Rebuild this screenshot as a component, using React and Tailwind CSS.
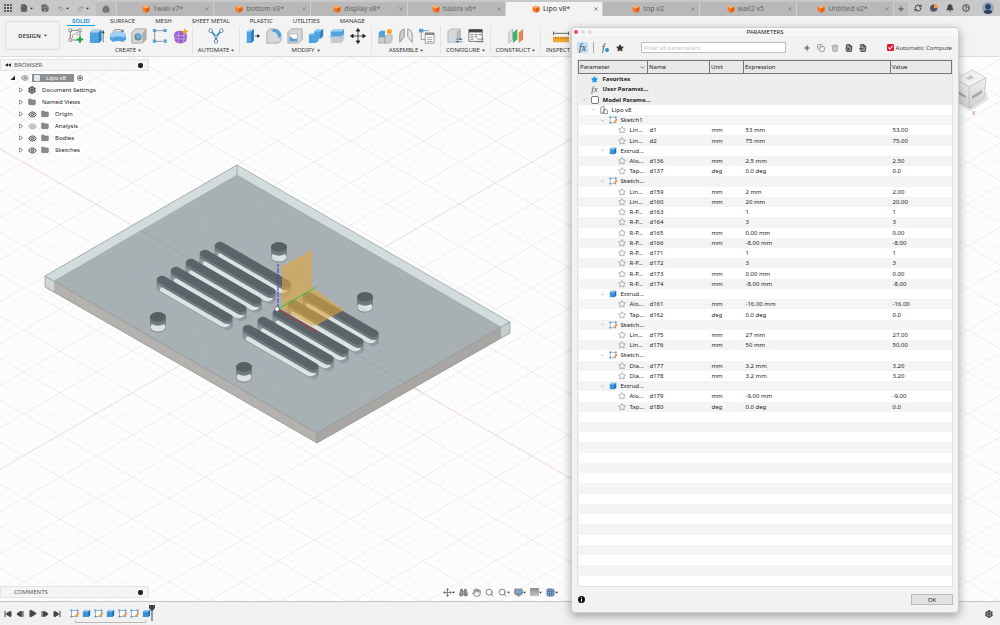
import { useState } from "react"
import {
  Bell, ChevronDown, CircleHelp, Copy, FileText, FileInput, FileOutput,
  Folder, Grid3x3, Hand, House, Move, Play, Plus, Redo2, RefreshCw, Save, Search, Settings,
  SkipBack, SkipForward, Star, StepBack, StepForward, Trash2, Undo2, X, Eye, Monitor, Binoculars,
} from "lucide-react"

const DOC_TABS = ["1wall v7*", "bottom v3*", "display v8*", "hasira v6*", "Lipo v8*", "top v2", "wall2 v5", "Untitled v2*"]
const RIBBON_TABS = ["SOLID", "SURFACE", "MESH", "SHEET METAL", "PLASTIC", "UTILITIES", "MANAGE"]

// kind, label, name, unit, expression, value
const PARAMS = [
  ["fav", "Favorites"],
  ["user", "User Paramet..."],
  ["model", "Model Parame..."],
  ["comp", "Lipo v8"],
  ["sketch", "Sketch1"],
  ["leaf", "Lin...", "d1", "mm", "53 mm", "53.00"],
  ["leaf", "Lin...", "d2", "mm", "75 mm", "75.00"],
  ["extrude", "Extrud..."],
  ["leaf", "Alo...", "d136", "mm", "2.5 mm", "2.50"],
  ["leaf", "Tap...", "d137", "deg", "0.0 deg", "0.0"],
  ["sketch", "Sketch..."],
  ["leaf", "Lin...", "d159", "mm", "2 mm", "2.00"],
  ["leaf", "Lin...", "d160", "mm", "20 mm", "20.00"],
  ["leaf", "R-P...", "d163", "", "1", "1"],
  ["leaf", "R-P...", "d164", "", "3", "3"],
  ["leaf", "R-P...", "d165", "mm", "0.00 mm", "0.00"],
  ["leaf", "R-P...", "d166", "mm", "-8.00 mm", "-8.00"],
  ["leaf", "R-P...", "d171", "", "1", "1"],
  ["leaf", "R-P...", "d172", "", "3", "3"],
  ["leaf", "R-P...", "d173", "mm", "0.00 mm", "0.00"],
  ["leaf", "R-P...", "d174", "mm", "-8.00 mm", "-8.00"],
  ["extrude", "Extrud..."],
  ["leaf", "Alo...", "d161", "mm", "-16.00 mm", "-16.00"],
  ["leaf", "Tap...", "d162", "deg", "0.0 deg", "0.0"],
  ["sketch", "Sketch..."],
  ["leaf", "Lin...", "d175", "mm", "27 mm", "27.00"],
  ["leaf", "Lin...", "d176", "mm", "50 mm", "50.00"],
  ["sketch", "Sketch..."],
  ["leaf", "Dia...", "d177", "mm", "3.2 mm", "3.20"],
  ["leaf", "Dia...", "d178", "mm", "3.2 mm", "3.20"],
  ["extrude", "Extrud..."],
  ["leaf", "Alo...", "d179", "mm", "-9.00 mm", "-9.00"],
  ["leaf", "Tap...", "d180", "deg", "0.0 deg", "0.0"],
]
const ROW_COUNT = 50
const ROWS = Array.from({ length: ROW_COUNT }, (_, i) => PARAMS[i] ?? ["empty", ""])

const INDENT = {
  fav: "pl-[2px]", user: "pl-[2px]", model: "pl-[2px]", comp: "pl-[11px]",
  sketch: "pl-[20px]", extrude: "pl-[20px]", leaf: "pl-[29px]", empty: "",
}

function Cube({ className }) {
  return (
    <svg viewBox="0 0 10 10" className={className} aria-hidden="true">
      <path d="M5 .5 9.2 2.4v5L5 9.6.8 7.4v-5Z" fill="#f47a1f" />
      <path d="M5 .5 9.2 2.4 5 4.4.8 2.4Z" fill="#ffb070" />
      <path d="M5 4.4 9.2 2.4v5L5 9.6Z" fill="#e35f0d" />
    </svg>
  )
}

function SketchIcon({ className }) {
  return (
    <svg viewBox="0 0 10 10" className={className} aria-hidden="true">
      <rect x="1.5" y="1.5" width="7" height="7" fill="#fff" stroke="#7d97ad" strokeWidth=".8" />
      <path d="M.5.5h2v2h-2zM7.5.5h2v2h-2zM.5 7.5h2v2h-2z" fill="#4f9bd3" />
      <path d="m5.5 8.8.5-1.8 3-3 1.2 1.2-3 3Z" fill="#f29b2e" />
      <path d="M9 4l1.2 1.2" stroke="#d44" strokeWidth="1" />
    </svg>
  )
}

function ExtrudeIcon({ className }) {
  return (
    <svg viewBox="0 0 10 10" className={className} aria-hidden="true">
      <path d="M1 3 3 1h6v6L7 9H1Z" fill="#3a93d6" />
      <path d="M1 3 3 1h6L7 3Z" fill="#8cc6ee" />
      <path d="M7 3 9 1v6L7 9Z" fill="#1f6ead" />
    </svg>
  )
}

function Caret() {
  return (
    <svg viewBox="0 0 4 3" className="w-[3px] h-[3px] shrink-0" aria-hidden="true">
      <path d="M0 .4h4L2 2.8Z" fill="#333" />
    </svg>
  )
}

// 18x18 drawings used by the ribbon
const ICONS = {
  newSketch: (
    <>
      <rect x="2.5" y="2.5" width="11" height="11" fill="none" stroke="#555" strokeWidth=".8" />
      <path d="M1 1h3v3H1zM12 1h3v3h-3zM1 12h3v3H1z" fill="#fff" stroke="#666" strokeWidth=".7" />
      <path d="M5 11V8l6-3v4" fill="none" stroke="#555" strokeWidth=".8" strokeDasharray="1.5 .8" />
      <path d="M13.5 9.500v7M10 13h7" stroke="#19a53c" strokeWidth="2.200" />
    </>
  ),
  extrude: (
    <>
      <path d="M1 5 4 2h10v12l-3 3H1Z" fill="#4ea3de" />
      <path d="M1 5 4 2h10l-3 3Z" fill="#a7d3f2" />
      <path d="M11 5 14 2v12l-3 3Z" fill="#2b7dbb" />
      <path d="M16 16V4M15 5.500 16 3l1 2.500Z" fill="#333" stroke="#333" strokeWidth=".7" />
    </>
  ),
  revolve: (
    <>
      <path d="M0 9c0-3 3-5 9-5s9 2 9 5v4l-4 3c-1-2-9-2-10 0l-4-3Z" fill="#4ea3de" />
      <path d="M0 9c0-3 3-5 9-5s9 2 9 5l-3 2c-2-2-10-2-12 0Z" fill="#9fd0f2" />
      <path d="M3 4C6 1 12 1 15 4M15 4l-2.500-.3M15 4l-.2-2.500" fill="none" stroke="#555" strokeWidth=".8" />
    </>
  ),
  hole: (
    <>
      <path d="M1 5 5 1h12v12l-4 4H1Z" fill="#d4d8db" stroke="#888" strokeWidth=".7" />
      <path d="M13 5 17 1v12l-4 4Z" fill="#a9aeb2" />
      <circle cx="8" cy="10" r="4" fill="#73808a" />
      <circle cx="8.700" cy="9.300" r="3" fill="#62aee2" />
    </>
  ),
  pattern: (
    <>
      <path d="M3 3h12M3 3v12M3 15h9" stroke="#777" strokeWidth=".8" fill="none" />
      <path d="M1 1h3.500v3.500H1zM13 1h3.500v3.500H13zM1 13h3.500v3.500H1zM13 13h3.500v3.500H13z" fill="#4ea3de" />
    </>
  ),
  form: (
    <>
      <path d="M1 7c1-3 4-4 7-4s7 2 8 5l-1 6c-2 4-11 5-13 0Z" fill="#9661c9" />
      <path d="M1 7c4 2 10 2 15 1M2 11c4 2 9 2 13 1M6.500 4c-1 4-1 9 0 13M11.500 4c1 4 1 9 0 13" stroke="#d3b8ec" strokeWidth=".7" fill="none" />
      <path d="m13.500 0 1.200 2.600L17.500 4l-2.800 1.400L13.500 8l-1.200-2.600L9.500 4l2.800-1.400Z" fill="#f9a825" />
    </>
  ),
  automate: (
    <>
      <path d="M3 3l6 7 6-7M9 10v5" stroke="#3f8fc6" strokeWidth="2" fill="none" />
      <g fill="#fff" stroke="#4d7896" strokeWidth="1">
        <circle cx="3" cy="3" r="2" /><circle cx="15" cy="3" r="2" /><circle cx="9" cy="9.500" r="1.600" /><circle cx="9" cy="15" r="2" />
      </g>
    </>
  ),
  pressPull: (
    <>
      <path d="M2 4 5 1h5v13l-3 3H2Z" fill="#4ea3de" />
      <path d="M2 4 5 1h5L7 4Z" fill="#b5dbf5" />
      <path d="M7 4 10 1v13l-3 3Z" fill="#2b7dbb" />
      <path d="M11 9h4M14 7.500l2.500 1.500L14 10.500Z" stroke="#222" strokeWidth=".7" fill="#222" />
    </>
  ),
  fillet: (
    <>
      <path d="M1 5 4 1h5c5 0 8 3 8 8v5l-3 3H1Z" fill="#d6dadd" stroke="#888" strokeWidth=".7" />
      <path d="M6 4 8 1c5 0 9 3 9 8l-3 3c0-5-3-8-8-8Z" fill="#4ea3de" />
    </>
  ),
  shell: (
    <>
      <path d="M1 5 5 1h12v12l-4 4H1Z" fill="#d4d8db" stroke="#888" strokeWidth=".7" />
      <path d="M3 6.500h8.500V15H3Z" fill="#fff" stroke="#888" strokeWidth=".5" />
      <path d="M3 15V9l4 3v3ZM7 15v-3h4.500v3Z" fill="#4ea3de" />
    </>
  ),
  combine: (
    <>
      <path d="M1 8 3 6h4V4l3-3h7v8l-3 3h-2v2l-3 3H1Z" fill="#4ea3de" />
      <path d="M7 4l3-3h7l-3 3ZM1 8l2-2h4v2Z" fill="#93c9ee" />
      <path d="M14 4l3-3v8l-3 3Z" fill="#2b7dbb" />
    </>
  ),
  split: (
    <>
      <path d="M2 4 5 1h12v5l-3 3H2Z" fill="#4ea3de" />
      <path d="M2 4 5 1h12l-3 3Z" fill="#a7d3f2" />
      <path d="M2 11h12l3-3v5l-3 4H2Z" fill="#c6cbcf" />
      <path d="M1 10h13l3-3" stroke="#2b7dbb" strokeWidth=".8" fill="none" />
    </>
  ),
  move: (
    <path d="M9 2v14M2 9h14M9 .500 7 3.500h4ZM9 17.500l-2-3h4ZM.500 9l3-2v4ZM17.500 9l-3-2v4Z" fill="#222" stroke="#222" strokeWidth=".9" />
  ),
  component: (
    <>
      <path d="M2 10V5l2-2h5v7Z" fill="#4ea3de" />
      <path d="M2 10h7v7H2Z" fill="#c9ced2" stroke="#888" strokeWidth=".6" />
      <path d="M9 10l2-2h6v6l-2 3H9Z" fill="#c9ced2" stroke="#888" strokeWidth=".6" />
      <circle cx="14" cy="4" r="3" fill="#f9a825" />
    </>
  ),
  joint: (
    <>
      <path d="M2 16V8c0-4 2-6 5-7v9Z" fill="#c9ced2" stroke="#777" strokeWidth=".8" />
      <path d="M16 16V8c0-4-2-6-5-7v9Z" fill="#e6e9eb" stroke="#777" strokeWidth=".8" />
    </>
  ),
  rigid: (
    <>
      <path d="M0 1h5v4H0z" fill="#4ea3de" />
      <path d="M2.500 5v8H7M5 3h6" stroke="#777" strokeWidth=".8" fill="none" />
      <path d="M7 5.500h10V17H7z" fill="#fff" stroke="#777" strokeWidth=".8" />
      <path d="M7 5.500h10v2.500H7z" fill="#888" />
      <path d="M9 10.500h6M9 13h6M9 15.300h6" stroke="#888" strokeWidth=".8" />
    </>
  ),
  configure: (
    <>
      <path d="M1 4 4 1h11v11l-4 4H1Z" fill="#d4d8db" stroke="#999" strokeWidth=".6" />
      <path d="M11 4 15 1v11l-4 4Z" fill="#b3b8bc" />
      <path d="M10 12.500h7.500M10 15.500h7.500" stroke="#357fb5" strokeWidth=".9" />
      <path d="M15.500 11.500v2M12 14.500v2" stroke="#444" strokeWidth="1.200" />
    </>
  ),
  configTable: (
    <>
      <path d="M1 2h15v13H1z" fill="#fff" stroke="#555" strokeWidth=".9" />
      <path d="M1 1.500h15V5H1z" fill="#444" />
      <path d="M3 7.500h3M7.500 7.500h3M12 7.500h3M3 10h3M7.500 10h3M3 12.500h3" stroke="#666" strokeWidth="1.100" />
      <path d="M10 12.500h7.500M10 15.500h7.500" stroke="#357fb5" strokeWidth=".9" />
    </>
  ),
  construct: (
    <>
      <path d="M1 17V5l4-4v12Z" fill="#e3e6e8" stroke="#888" strokeWidth=".6" />
      <path d="M5.500 17V5l5-4v12Z" fill="#3bb56c" />
      <path d="M12 17V5l5-4v12Z" fill="#e3854f" />
    </>
  ),
  measure: (
    <>
      <path d="M0 10h18v6H0z" fill="#f0a830" />
      <path d="M3 10v2.500M6 10v2M9 10v2.500M12 10v2M15 10v2.500" stroke="#8a5a10" strokeWidth=".7" />
      <path d="M0 6h18M.5 4v4M17.500 4v4" stroke="#333" strokeWidth=".8" />
    </>
  ),
}

const GROUPS = [
  { label: "CREATE", width: "w-[129px]", icons: ["newSketch", "extrude", "revolve", "hole", "pattern", "form"] },
  { label: "AUTOMATE", width: "w-[47px]", icons: ["automate"] },
  { label: "MODIFY", width: "w-[132px]", icons: ["pressPull", "fillet", "shell", "combine", "split", "move"] },
  { label: "ASSEMBLE", width: "w-[69px]", icons: ["component", "joint", "rigid"] },
  { label: "CONFIGURE", width: "w-[50px]", icons: ["configure", "configTable"] },
  { label: "CONSTRUCT", width: "w-[50px]", icons: ["construct"] },
  { label: "INSPECT", width: "w-[40px]", icons: ["measure"] },
]

function DocumentBar() {
  return (
    <header className="flex h-4 shrink-0 items-stretch bg-[#c8c8c8] text-[#555]">
      <div className="flex w-24 shrink-0 items-center gap-2 pl-[4px]">
        <button aria-label="Apps">
          <svg viewBox="0 0 8 8" className="size-2" fill="#555">
            <path d="M0 0h2v2H0zM3 0h2v2H3zM6 0h2v2H6zM0 3h2v2H0zM3 3h2v2H3zM6 3h2v2H6zM0 6h2v2H0zM3 6h2v2H3zM6 6h2v2H6z" />
          </svg>
        </button>
        <button aria-label="File" className="flex items-center gap-[2px]">
          <FileText size={8} strokeWidth={3} fill="#777" /><Caret />
        </button>
        <button aria-label="Save"><Save size={8} strokeWidth={3} fill="#999" /></button>
        <button aria-label="Undo" className="flex items-center gap-[2px] text-[#999]"><Undo2 size={7} strokeWidth={3} /><Caret /></button>
        <button aria-label="Redo" className="flex items-center gap-[2px] text-[#999]"><Redo2 size={7} strokeWidth={3} /><Caret /></button>
      </div>
      <button aria-label="Home" className="mt-[2px] flex w-5 shrink-0 items-center justify-center bg-[#bdbdbd]">
        <House size={8} strokeWidth={3} fill="#777" className="text-[#777]" />
      </button>
      {DOC_TABS.map((name) => {
        const active = name === "Lipo v8*"
        return (
          <div
            key={name}
            className={`mt-[2px] flex flex-1 items-center border-l border-[#cfcfcf] ${active ? "bg-[#f3f3f3] text-[#333]" : "bg-[#b8b8b8] text-[#666]"}`}
          >
            <button className="flex flex-1 items-center justify-center gap-[3px] text-[7px] leading-[10px] pl-[4px]">
              <Cube className="w-2 h-2" />
              {name}
            </button>
            <button aria-label={`Close ${name}`} className="pr-[3px]"><X size={6} strokeWidth={2} /></button>
          </div>
        )
      })}
      <button aria-label="New design" className="mt-[2px] flex w-[15px] items-center justify-center border-l border-[#cfcfcf] bg-[#bdbdbd]">
        <Plus size={8} strokeWidth={3} />
      </button>
      <div className="flex w-[92px] shrink-0 items-center gap-2 pl-[6px] text-[#444]">
        <button aria-label="Extensions"><RefreshCw size={8} strokeWidth={3} /></button>
        <button aria-label="Job status">
          <svg viewBox="0 0 8 8" className="size-2">
            <circle cx="3.700" cy="4.200" r="3.600" fill="#4d5663" />
            <path d="M4 4V0a4 4 0 0 1 4 4Z" fill="#f0a030" />
          </svg>
        </button>
        <button aria-label="Notifications"><Bell size={8} strokeWidth={3} fill="#444" /></button>
        <button aria-label="Help"><CircleHelp size={8} strokeWidth={3} /></button>
        <button aria-label="Account" className="ml-[4px]">
          <svg viewBox="0 0 12 12" className="size-3">
            <circle cx="6" cy="6" r="6" fill="#93a6bf" />
            <circle cx="6" cy="4.800" r="2.800" fill="#2f4260" />
            <path d="M1.500 10c1-3 8-3 9 0a6 6 0 0 1-9 0Z" fill="#2f4260" />
          </svg>
        </button>
      </div>
    </header>
  )
}

function Ribbon() {
  return (
    <div className="flex h-[41px] shrink-0 border-b border-[#dcdcdc] bg-[#f3f3f3] text-[6px] leading-[8px] text-[#333]">
      <button className="mt-[5px] ml-[5px] flex h-[29px] w-[55px] shrink-0 items-center justify-center gap-[3px] rounded-[2px] border border-[#dedede] font-semibold">
        DESIGN <Caret />
      </button>
      <div className="flex flex-1 flex-col pl-1">
        <nav className="flex gap-5 pl-[8px]">
          {RIBBON_TABS.map((tab) => (
            <button
              key={tab}
              className={tab === "SOLID"
                ? "relative py-[1px] text-[#0a8fd0] font-semibold after:absolute after:-inset-x-[5px] after:bottom-0 after:h-px after:bg-[#0a9be0]"
                : "py-[1px]"}
            >
              {tab}
            </button>
          ))}
        </nav>
        <div className="flex">
          {GROUPS.map((group) => (
            <div key={group.label} className={`flex h-[28px] shrink-0 flex-col items-center border-r border-[#e2e2e2] ${group.width}`}>
              <div className="flex w-full flex-1 items-center justify-center gap-[5px]">
                {group.icons.map((icon) => (
                  <button key={icon} aria-label={icon}>
                    <svg viewBox="0 0 18 18" className="size-4">{ICONS[icon]}</svg>
                  </button>
                ))}
              </div>
              <button className="flex items-center gap-[2px]">{group.label} <Caret /></button>
            </div>
          ))}
        </div>
      </div>
    </div>
  )
}

const SLOTS = [
  [220, 245], [205, 253], [191, 262], [176, 270], [162, 279],
  [308, 295], [293, 303], [278, 312], [263, 320], [248, 328],
]
const HOLES = [[279, 247], [365, 297], [158, 317], [244, 367]]

// one elongated hole, 18 mm between centres, seen from the iso view
function Slot({ x, y }) {
  const line = (dy, color, d = "M0 0H18") => (
    <path
      key={dy}
      d={d}
      transform={`matrix(3.63 2.1 3.63 -2.1 ${x} ${y + dy})`}
      stroke={color}
      strokeWidth="2"
      strokeLinecap="round"
    />
  )
  return (
    <g>
      {[10, 8, 6, 4].map((dy) => line(dy, "#929ca0"))}
      {line(9, "#dde2e4", "M.8 0H17.2")}
      {[4, 3, 2].map((dy) => line(dy, "#707a7f"))}
      {[1, 0].map((dy) => line(dy, "#5a6368"))}
      <path d={`M${x - 5} ${y}v10M${x + 70} ${y + 38}v10`} stroke="#6d777c" strokeWidth=".6" />
    </g>
  )
}

function Viewport() {
  return (
    <svg viewBox="0 57 1000 544" preserveAspectRatio="xMidYMid slice" className="absolute inset-0 h-full w-full" aria-hidden="true">
      <defs>
        <pattern id="grid" width="10" height="10" patternUnits="userSpaceOnUse" patternTransform="matrix(3.63 2.1 3.63 -2.1 277 309)">
          <path d="M0 2H10M0 4H10M0 6H10M0 8H10M2 0V10M4 0V10M6 0V10M8 0V10" stroke="#f4f4f4" strokeWidth=".14" />
          <path d="M0 0H10M0 0V10" stroke="#e0e0e0" strokeWidth=".24" />
        </pattern>
        <pattern id="plateGrid" width="2" height="2" patternUnits="userSpaceOnUse" patternTransform="matrix(3.63 2.1 3.63 -2.1 277 309)">
          <path d="M0 0H2M0 0V2" stroke="#8f989c" strokeWidth=".14" />
        </pattern>
        <linearGradient id="cubeSide" x1="0" y1="0" x2="0" y2="1">
          <stop offset="0" stopColor="#f0f0f0" />
          <stop offset="1" stopColor="#cfcfcf" />
        </linearGradient>
      </defs>
      <rect x="0" y="57" width="1000" height="544" fill="#fdfdfd" />
      <rect x="0" y="57" width="1000" height="544" fill="url(#grid)" />
      <path d="M0 149 580 484" stroke="#f8d6d6" strokeWidth=".8" />
      <path d="M0 469 580 134" stroke="#d2f0d2" strokeWidth=".8" />

      {/* plate */}
      <path d="M237 165 510 322V333L317 443 45 287V276Z" fill="#d3dcdc" />
      <path d="M237 175 501 327 317 433 54 281Z" fill="#a9b1b4" />
      <path d="M237 175 501 327 317 433 54 281Z" fill="url(#plateGrid)" opacity=".5" />
      <path d="M45 276 317 433V443L45 287Z" fill="#b5b1af" />
      <path d="M317 433 510 322V333L317 443Z" fill="#aaa6a4" />
      <path d="M45 276 54 281 54 292 45 287Z" fill="#cfd4d4" />
      <path d="M510 322 501 327 501 338 510 333Z" fill="#c8cdcd" />
      <path d="M237 165 510 322 317 433 45 276ZM45 276V287L317 443 510 333V322M317 433V443M237 165V175" fill="none" stroke="#7f8b8b" strokeWidth=".6" />
      <path d="M54 281 237 175 501 327" fill="none" stroke="#9aa4a6" strokeWidth=".5" />
      <path d="M140 230 420 391" stroke="#9c9a9e" strokeWidth=".4" />

      {HOLES.map(([x, y]) => (
        <g key={x}>
          <path d={`M${x - 8} ${y}a8 4.700 0 0 1 16 0v11a8 4.700 0 0 1-16 0Z`} fill="#848c90" />
          <ellipse cx={x} cy={y + 10} rx="7.500" ry="4.500" fill="#dde2e4" />
          <path d={`M${x - 8} ${y}a8 4.700 0 0 1 16 0v4a8 4.700 0 0 1-16 0Z`} fill="#72797d" />
          <ellipse cx={x} cy={y} rx="8" ry="4.700" fill="#575f63" />
        </g>
      ))}
      {SLOTS.map(([x, y]) => <Slot key={x} x={x} y={y} />)}
      <path d="M220 227 403 332 307 389 125 284Z" fill="none" stroke="#7fbdd2" strokeWidth=".6" strokeDasharray="3 1" />

      {/* origin planes and axes */}
      <path d="M282 266 312 250V326L282 309Z" fill="#e0a53c" opacity=".6" />
      <path d="M312 287 344 310 315 326 312 325Z" fill="#e0a53c" opacity=".6" />
      <path d="M278 309V264" stroke="#3b3bb8" strokeWidth="1" strokeDasharray="5 1" />
      <path d="M278 309 316 287" stroke="#36cc36" strokeWidth="1" />
      <path d="M278 309 317 332" stroke="#dd3030" strokeWidth="1" />
      <circle cx="277" cy="309" r="2.400" fill="#fff" stroke="#444" strokeWidth=".7" />

      {/* view cube */}
      <path d="M958 104 970 111 988 100 987 92Z" fill="#c9c9c9" opacity=".5" />
      <path d="M955 98 972 108" stroke="#e58f8f" strokeWidth="1" />
      <path d="M972 70 986 78 969 87 956 79Z" fill="#f1f1f1" stroke="#b5b5b5" strokeWidth=".6" />
      <path d="M969 87 986 78 984 98 969 108Z" fill="url(#cubeSide)" stroke="#b5b5b5" strokeWidth=".6" />
      <path d="M969 87 956 79V100L969 108Z" fill="url(#cubeSide)" stroke="#b5b5b5" strokeWidth=".6" />
      <path d="M972 96 982 90V93L972 99ZM958 91 966 96V98L958 94Z" fill="#a5a5a5" />
      <path d="M966 78 971 75 974 78 969 80Z" fill="#c6c6c6" />
      <text x="972" y="115" fontSize="6" fill="#e06a6a">X</text>
    </svg>
  )
}

const BROWSER_ROWS = [
  { label: "Document Settings", icon: "gear" },
  { label: "Named Views", icon: "folder" },
  { label: "Origin", icon: "folder", eye: true },
  { label: "Analysis", icon: "folder", eye: true, off: true },
  { label: "Bodies", icon: "folder", eye: true },
  { label: "Sketches", icon: "folder", eye: true },
]

function PanelBar({ title, collapse }) {
  return (
    <div className="flex h-3 w-[149px] items-center border border-[#e4e4e4] bg-[#f4f4f4] pr-[5px] text-[6px] leading-[8px] text-[#555]">
      <span className="flex w-[13px] shrink-0 pl-[4px]">
        {collapse && (
          <svg viewBox="0 0 6 4" className="h-[4px] w-[6px]"><path d="M0 2 3 .2v3.600ZM3 2 6 .2v3.600Z" fill="#222" /></svg>
        )}
      </span>
      <span className="flex-1">{title}</span>
      <button aria-label={`${title} options`} className="size-[5px] rounded-[2px] bg-[#222]" />
    </div>
  )
}

function Twisty() {
  return (
    <svg viewBox="0 0 6 6" className="size-[6px] shrink-0" aria-hidden="true">
      <path d="M1.500.8 4.500 3l-3 2.200Z" fill="#fff" stroke="#555" strokeWidth=".6" />
    </svg>
  )
}

function Browser() {
  return (
    <section className="flex flex-col pt-[2px] text-[6px] leading-[8px] text-[#222]">
      <PanelBar title="BROWSER" collapse />
      <ul className="mt-px">
        <li className="flex h-3 items-center gap-[3px] pl-[10px]">
          <svg viewBox="0 0 6 6" className="size-[6px]"><path d="M5 .5V5H.5Z" fill="#222" /></svg>
          <Eye size={8} strokeWidth={2.500} className="ml-[2px] text-[#777]" />
          <span className="flex h-[8px] w-[42px] items-center gap-[6px] bg-[#8e8e8e] pl-[2px] text-white">
            <span className="size-[6px] rounded-[1px] bg-[#dfe8f0]" />Lipo v8
          </span>
          <span className="flex size-[6px] items-center justify-center rounded-full border border-[#777]">
            <span className="size-[2px] rounded-full bg-[#222]" />
          </span>
        </li>
        {BROWSER_ROWS.map((row) => (
          <li key={row.label} className="flex h-3 items-center gap-[4px] pl-[18px]">
            <Twisty />
            {row.eye && <Eye size={9} strokeWidth={2.500} fill="#ccc" className={row.off ? "text-[#bbb]" : "text-[#555]"} />}
            {row.icon === "gear"
              ? <Settings size={8} strokeWidth={4} className="text-[#555]" />
              : <Folder size={8} strokeWidth={2} fill="#8a8a8a" className="text-[#777]" />}
            <span className="bg-white/70 px-[2px]">{row.label}</span>
          </li>
        ))}
      </ul>
    </section>
  )
}

const NAV_TOOLS = [
  { label: "Orbit", Icon: Move, caret: true },
  { label: "Look at", Icon: Binoculars, fill: "#999" },
  { label: "Pan", Icon: Hand },
  { label: "Zoom", Icon: Search },
  { label: "Fit", Icon: Search, caret: true },
  { label: "Display settings", Icon: Monitor, caret: true, fill: "#7fa3cf" },
  { label: "Grid and snaps", swatch: "bg-linear-to-b from-[#8c8c8c] to-[#c4c4c4]", caret: true },
  { label: "Viewports", Icon: Grid3x3, caret: true, fill: "#8fb4e6", tint: "text-[#54749f]" },
]

function CanvasFooter() {
  return (
    <div className="flex items-center pb-[3px]">
      <PanelBar title="COMMENTS" />
      <div className="ml-[294px] flex items-center gap-[4px] text-[#777]">
        {NAV_TOOLS.map(({ label, Icon, caret, fill, swatch, tint = "" }) => (
          <button key={label} aria-label={label} className={`flex items-center ${tint}`}>
            {swatch
              ? <span className={`h-2 w-[9px] ${swatch}`} />
              : <Icon size={9} strokeWidth={2.500} fill={fill ?? "none"} />}
            {caret && <Caret />}
          </button>
        ))}
      </div>
    </div>
  )
}

function Timeline() {
  const features = ["s", "e", "s", "e", "s", "s", "e"]
  return (
    <footer className="flex h-6 shrink-0 items-center border-t border-[#c4c4c4] bg-[#f1f1f1] px-[4px] text-[#444]">
      <div className="flex items-center gap-[4px]">
        <button aria-label="Go to start"><SkipBack size={8} strokeWidth={3} fill="#444" /></button>
        <button aria-label="Step back"><StepBack size={8} strokeWidth={3} fill="#444" /></button>
        <button aria-label="Play"><Play size={9} strokeWidth={2} fill="#444" /></button>
        <button aria-label="Step forward"><StepForward size={8} strokeWidth={3} fill="#444" /></button>
        <button aria-label="Go to end"><SkipForward size={8} strokeWidth={3} fill="#444" /></button>
      </div>
      <div className="relative ml-[9px] flex items-center gap-[3px]">
        {features.map((f, i) => (
          <button key={i} aria-label={f === "s" ? "Sketch" : "Extrude"}>
            {f === "s" ? <SketchIcon className="size-[9px]" /> : <ExtrudeIcon className="size-[9px]" />}
          </button>
        ))}
        <span className="absolute left-[5px] right-[5px] top-[11px] h-[3px] border-x border-b border-[#bbb]" />
        <svg viewBox="0 0 6 16" className="absolute -right-[4px] -top-[4px] h-4 w-[6px]">
          <path d="M0 0h6v3L3.500 6v10h-1V6L0 3Z" fill="#444" />
        </svg>
      </div>
      <button aria-label="Timeline settings" className="ml-auto mr-[3px]"><Settings size={8} strokeWidth={4} /></button>
    </footer>
  )
}

function RowIcon({ kind }) {
  if (kind === "fav") return <Star size={7} fill="#1597e5" className="text-[#1597e5]" />
  if (kind === "user") return <span className="font-['Liberation_Serif',serif] text-[9px] italic leading-[8px] text-[#555]">fx</span>
  if (kind === "model") return <span className="size-[8px] rounded-[2px] border border-[#777] bg-white" />
  if (kind === "comp") {
    return (
      <svg viewBox="0 0 10 10" className="size-2">
        <path d="M1 9V2l2-1.500h2V9ZM5 4h3l1.500 2v3.500H4Z" fill="#fff" stroke="#666" strokeWidth=".9" />
      </svg>
    )
  }
  if (kind === "sketch") return <SketchIcon className="size-2" />
  if (kind === "extrude") return <ExtrudeIcon className="size-2" />
  return <Star size={8} strokeWidth={1.500} className="text-[#666]" />
}

function ParamRow({ row, index }) {
  const [kind, label, name, unit, expression, value] = row
  const heading = index < 3
  const bg = heading ? "bg-[#eeeeee]" : index % 2 ? "bg-white" : "bg-[#f4f4f4]"
  return (
    <tr className={bg}>
      <td className={`p-0 ${INDENT[kind]}`}>
        <div className="flex h-[10px] items-center">
          {kind !== "empty" && (
            <>
              <span className="flex w-[8px] shrink-0 justify-center">
                {!["fav", "user", "leaf"].includes(kind) && <ChevronDown size={5} className="text-[#777]" />}
              </span>
              <span className="flex w-[12px] shrink-0 items-center justify-center"><RowIcon kind={kind} /></span>
              <span className={`whitespace-nowrap pl-[2px] ${heading ? "font-bold" : ""}`}>{label}</span>
            </>
          )}
        </div>
      </td>
      <td className="py-0 pl-[2px]">{name}</td>
      <td className="py-0 pl-[2px]">{unit}</td>
      <td className="py-0 pl-[2px]">{expression}</td>
      <td className="py-0 pl-[2px]">{value}</td>
    </tr>
  )
}

function ParametersDialog() {
  const [filter, setFilter] = useState("")
  const [auto, setAuto] = useState(true)

  return (
    <section
      role="dialog"
      aria-label="Parameters"
      className="absolute bottom-3 right-[41px] top-[27px] flex w-[388px] flex-col rounded-[4px] border border-[#cfcfcf] bg-[#f2f2f2] px-[5px] text-[6px] leading-[8px] text-[#222] shadow-[0_3px_10px_rgba(0,0,0,0.35)]"
    >
      <div className="-mx-[5px] flex h-[8px] shrink-0 items-center rounded-t-[4px] bg-[#f8f8f8] px-[2px]">
        <div className="flex w-10 gap-[3px]">
          <button aria-label="Close" className="size-[4px] rounded-full bg-[#f04b43]" />
          <button aria-label="Minimize" className="size-[4px] rounded-full bg-[#dcdcdc]" />
          <button aria-label="Zoom" className="size-[4px] rounded-full bg-[#dcdcdc]" />
        </div>
        <h2 className="flex-1 text-center">PARAMETERS</h2>
        <span className="w-10" />
      </div>

      <div className="flex h-[23px] shrink-0 items-center text-[#444]">
        <button aria-label="All parameters" className="flex size-[11px] items-center justify-center rounded-[1px] bg-[#c3dff5] font-['Liberation_Serif',serif] text-[10px] italic">fx</button>
        <span className="mx-[5px] h-[11px] w-px bg-[#aaa]" />
        <button aria-label="User parameters" className="flex w-[13px] items-end justify-center font-['Liberation_Serif',serif] text-[10px] italic">
          f<span className="size-[4px] rounded-full bg-[#2b8fd8]" />
        </button>
        <button aria-label="Favorites" className="ml-[4px]"><Star size={8} fill="#333" /></button>
        <input
          aria-label="Filter all parameters"
          placeholder="Filter all parameters"
          value={filter}
          onChange={(e) => setFilter(e.target.value)}
          className="ml-[17px] h-[11px] w-[145px] border border-[#bdbdbd] bg-white px-[2px] placeholder:text-[#c4c4c4]"
        />
        <div className="ml-[17px] flex gap-[6px]">
          <button aria-label="Add"><Plus size={8} strokeWidth={3} /></button>
          <button aria-label="Duplicate" className="text-[#999]"><Copy size={8} strokeWidth={3} /></button>
          <button aria-label="Delete" className="text-[#aaa]"><Trash2 size={8} strokeWidth={3} fill="#ccc" /></button>
          <button aria-label="Import"><FileInput size={8} strokeWidth={3} fill="#999" /></button>
          <button aria-label="Export"><FileOutput size={8} strokeWidth={3} fill="#999" /></button>
        </div>
        <label className="ml-auto mr-px flex items-center gap-[2px]">
          <span className="relative flex size-[7px]">
            <input
              type="checkbox"
              checked={auto}
              onChange={() => setAuto(!auto)}
              className="size-[7px] appearance-none rounded-[1px] border border-[#e0162b] checked:bg-[#e0162b]"
            />
            {auto && (
              <svg viewBox="0 0 7 7" className="pointer-events-none absolute inset-0 size-[7px]">
                <path d="M1.500 3.500 3 5l2.700-3.200" fill="none" stroke="#fff" strokeWidth="1.100" />
              </svg>
            )}
          </span>
          Automatic Compute
        </label>
      </div>

      <div className="min-h-0 flex-1 border border-[#e2e2e2]">
        <table className="h-full w-full table-fixed border-collapse text-left">
          <colgroup>
            <col className="w-[69px]" />
            <col className="w-[62px]" />
            <col className="w-[34px]" />
            <col className="w-[147px]" />
            <col />
          </colgroup>
          <thead>
            <tr className="h-[13px] bg-[#e8e8e8]">
              <th className="border border-[#777] py-0 pl-px font-normal">
                <span className="flex items-center justify-between pr-[2px]">Parameter <ChevronDown size={5} strokeWidth={3} /></span>
              </th>
              {["Name", "Unit", "Expression", "Value"].map((h) => (
                <th key={h} className="border border-[#777] py-0 pl-px font-normal">{h}</th>
              ))}
            </tr>
          </thead>
          <tbody>
            {ROWS.map((row, i) => <ParamRow key={i} row={row} index={i} />)}
          </tbody>
        </table>
      </div>

      <div className="flex h-[25px] shrink-0 items-center justify-between">
        <button aria-label="Info" className="ml-px">
          <svg viewBox="0 0 7 7" className="size-[7px]">
            <circle cx="3.500" cy="3.500" r="3.500" fill="#111" />
            <path d="M3.500 1.300v1M3.500 3v2.700" stroke="#fff" strokeWidth="1" />
          </svg>
        </button>
        <button className="h-[11px] w-[42px] border border-[#bbb] bg-[#e2e2e2]">OK</button>
      </div>
    </section>
  )
}

export default function App() {
  return (
    <div className="relative flex h-screen flex-col overflow-hidden bg-[#f1f1f1] font-['Noto_Sans',sans-serif]">
      <DocumentBar />
      <Ribbon />
      <main className="relative min-h-0 flex-1 overflow-hidden">
        <Viewport />
        <div className="relative flex h-full flex-col justify-between">
          <Browser />
          <CanvasFooter />
        </div>
      </main>
      <Timeline />
      <ParametersDialog />
    </div>
  )
}
